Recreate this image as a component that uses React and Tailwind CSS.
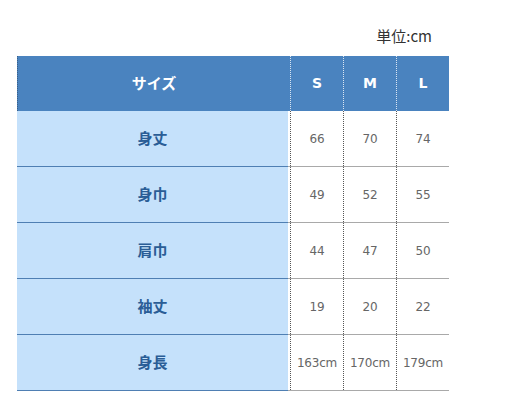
import React from "react";

const rows = [
  { label: "身丈", s: "66", m: "70", l: "74" },
  { label: "身巾", s: "49", m: "52", l: "55" },
  { label: "肩巾", s: "44", m: "47", l: "50" },
  { label: "袖丈", s: "19", m: "20", l: "22" },
  { label: "身長", s: "163cm", m: "170cm", l: "179cm" },
];

const font = { fontFamily: '"Noto Sans CJK JP", "DejaVu Sans", sans-serif' };
const numFont = { fontFamily: '"DejaVu Sans", "Noto Sans CJK JP", sans-serif' };

export default function App() {
  return (
    <div className="w-[506px] h-[412px] bg-white" style={font}>
      <div className="pl-[17px] pt-[25px]">
        <div className="w-[432px]">
          <div className="flex justify-end pr-[17px] h-[31px] text-[15px] text-[#333] leading-[22px]">
            単位:cm
          </div>

          {/* header */}
          <div className="flex h-[55px] bg-[#4a83bf] border-l border-dotted border-[#3a5f88] text-white font-bold text-[15px]">
            <div className="w-[272px] flex items-center justify-center">サイズ</div>
            {["S", "M", "L"].map((s) => (
              <div
                key={s}
                className="w-[53px] flex items-center justify-center border-l border-dotted border-white/80 text-[14px]"
                style={numFont}
              >
                {s}
              </div>
            ))}
          </div>

          {rows.map((r) => (
            <div key={r.label} className="flex h-[56px]">
              <div className="w-[271px] flex items-center justify-center bg-[#c5e1fb] border-b border-[#4f7fb3] text-[#2a5d96] font-bold text-[15px]">
                {r.label}
              </div>
              <div className="w-[2px] border-b border-[#a9a9a9]" />
              {[r.s, r.m, r.l].map((v, i) => (
                <div key={i} className="w-[53px] border-b border-[#a9a9a9]">
                  <div
                    className="h-full flex items-center justify-center border-l border-dotted border-[#555] text-[12px] text-[#666] tracking-[-0.2px]"
                    style={numFont}
                  >
                    {v}
                  </div>
                </div>
              ))}
            </div>
          ))}
        </div>
      </div>
    </div>
  );
}
